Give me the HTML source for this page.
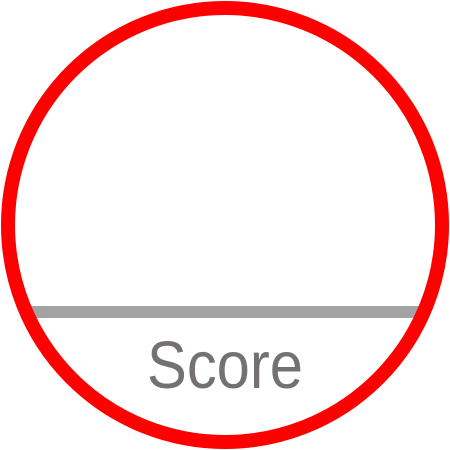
<!DOCTYPE html>
<html><head><style>html,body{margin:0;padding:0;background:#fff;width:450px;height:450px;overflow:hidden}</style></head>
<body>
<svg width="450" height="450" viewBox="0 0 450 450" xmlns="http://www.w3.org/2000/svg">
<rect x="24" y="306" width="402" height="12" fill="#a3a3a3"/>
<circle cx="225" cy="225" r="217" fill="none" stroke="#ff0000" stroke-width="14"/>
<text x="147" y="388" font-family="Liberation Sans, sans-serif" font-size="67" fill="#757171" textLength="156" lengthAdjust="spacingAndGlyphs">Score</text>
</svg>
</body></html>
